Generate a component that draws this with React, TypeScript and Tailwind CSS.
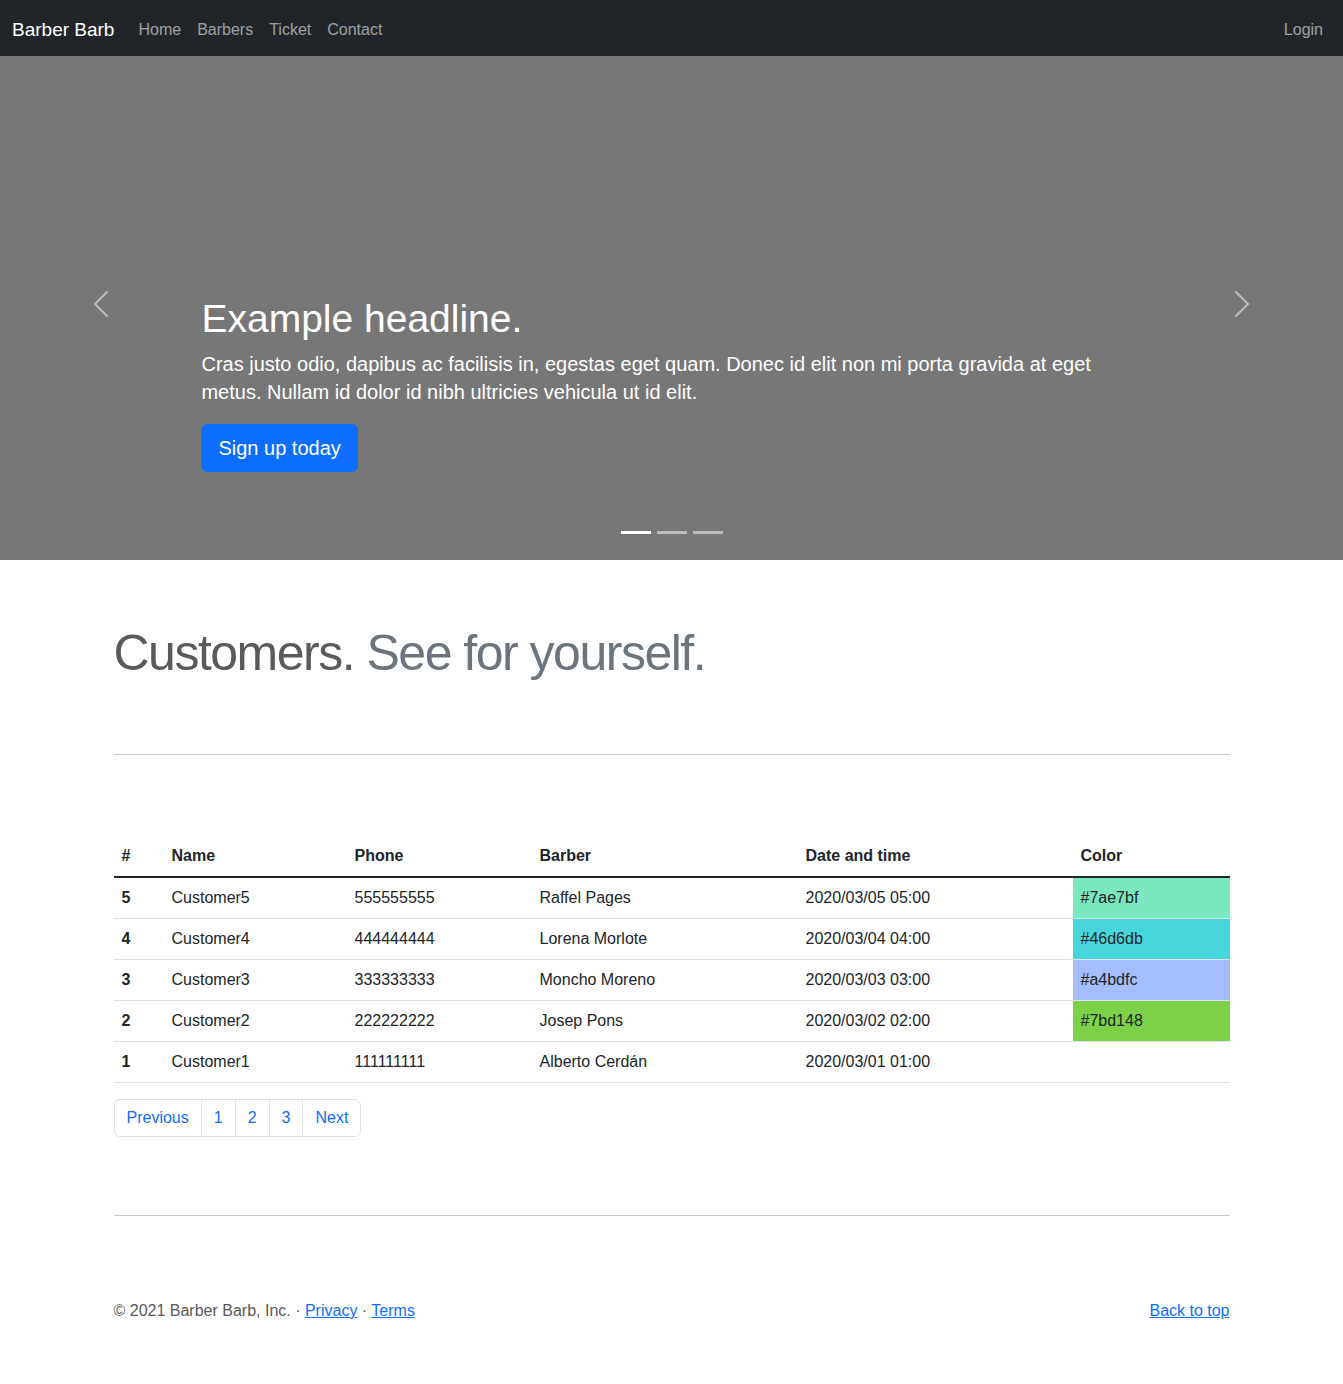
import React from "react";

const rows = [
  { id: 5, name: "Customer5", phone: "555555555", barber: "Raffel Pages", date: "2020/03/05 05:00", color: "#7ae7bf", bg: "bg-[#7ae7bf]" },
  { id: 4, name: "Customer4", phone: "444444444", barber: "Lorena Morlote", date: "2020/03/04 04:00", color: "#46d6db", bg: "bg-[#46d6db]" },
  { id: 3, name: "Customer3", phone: "333333333", barber: "Moncho Moreno", date: "2020/03/03 03:00", color: "#a4bdfc", bg: "bg-[#a4bdfc]" },
  { id: 2, name: "Customer2", phone: "222222222", barber: "Josep Pons", date: "2020/03/02 02:00", color: "#7bd148", bg: "bg-[#7bd148]" },
  { id: 1, name: "Customer1", phone: "111111111", barber: "Alberto Cerdán", date: "2020/03/01 01:00", color: "", bg: "" },
];

function Chevron({ dir }: { dir: "left" | "right" }) {
  return (
    <svg viewBox="0 0 16 16" className="w-8 h-8" fill="#fff">
      {dir === "left" ? (
        <path d="M11.354 1.646a.5.5 0 0 1 0 .708L5.707 8l5.647 5.646a.5.5 0 0 1-.708.708l-6-6a.5.5 0 0 1 0-.708l6-6a.5.5 0 0 1 .708 0z" />
      ) : (
        <path d="M4.646 1.646a.5.5 0 0 1 .708 0l6 6a.5.5 0 0 1 0 .708l-6 6a.5.5 0 0 1-.708-.708L10.293 8 4.646 2.354a.5.5 0 0 1 0-.708z" />
      )}
    </svg>
  );
}

export default function App() {
  return (
    <div className="min-h-[1384px] bg-white text-[#5a5a5a]" style={{ fontFamily: "'Liberation Sans', Arial, sans-serif" }}>
      {/* Navbar */}
      <nav className="h-14 bg-[#212529] px-3 pt-1 flex items-center">
        <span className="text-[19px] text-white mr-4">Barber Barb</span>
        <div className="flex text-base text-white/55">
          <a className="px-2">Home</a>
          <a className="px-2">Barbers</a>
          <a className="px-2">Ticket</a>
          <a className="px-2">Contact</a>
        </div>
        <a className="ml-auto px-2 text-base text-white/55">Login</a>
      </nav>

      {/* Carousel */}
      <section className="h-[504px] bg-[#777] flex">
        <div className="w-[15%] flex items-center justify-center pb-2 opacity-50">
          <Chevron dir="left" />
        </div>
        <div className="flex-1 flex flex-col justify-end text-white">
          <div className="pb-5">
            <h1 className="text-[39px] leading-[1.2] mb-[7px]">Example headline.</h1>
            <p className="text-xl leading-[1.4] mb-[18px]">
              Cras justo odio, dapibus ac facilisis in, egestas eget quam. Donec id elit non mi porta gravida at eget metus. Nullam id dolor id nibh ultricies vehicula ut id elit.
            </p>
            <div className="h-12 mb-5">
              <a className="inline-block bg-[#0d6efd] text-white text-xl leading-[1.5] px-4 py-2 rounded-md border border-[#0d6efd]">Sign up today</a>
            </div>
          </div>
          <div className="flex justify-center gap-1.5 mt-[19px] mb-[26px]">
            <span className="w-[30px] h-[3px] bg-white" />
            <span className="w-[30px] h-[3px] bg-white/50" />
            <span className="w-[30px] h-[3px] bg-white/50" />
          </div>
        </div>
        <div className="w-[15%] flex items-center justify-center pb-2 opacity-50">
          <Chevron dir="right" />
        </div>
      </section>

      {/* Main */}
      <main className="w-[1140px] mx-auto px-3 pt-16">
        <h2 className="text-[50px] leading-none font-light tracking-[-1.5px] pt-1">
          Customers. <span className="text-[#6c757d]">See for yourself.</span>
        </h2>

        <hr className="mt-[76px] mb-[81px] border-t border-[#212529]/25" />

        <table className="w-full table-fixed text-base text-[#212529] mb-4 border-collapse">
          <colgroup>
            <col className="w-[50px]" />
            <col className="w-[183px]" />
            <col className="w-[185px]" />
            <col className="w-[266px]" />
            <col className="w-[275px]" />
            <col className="w-[157px]" />
          </colgroup>
          <thead>
            <tr className="border-b-2 border-[#212529] text-left">
              <th className="p-2 leading-6 font-bold">#</th>
              <th className="p-2 leading-6 font-bold">Name</th>
              <th className="p-2 leading-6 font-bold">Phone</th>
              <th className="p-2 leading-6 font-bold">Barber</th>
              <th className="p-2 leading-6 font-bold">Date and time</th>
              <th className="p-2 leading-6 font-bold">Color</th>
            </tr>
          </thead>
          <tbody>
            {rows.map((r) => (
              <tr key={r.id} className="border-b border-[#dee2e6]">
                <td className="p-2 leading-6 font-bold">{r.id}</td>
                <td className="p-2 leading-6">{r.name}</td>
                <td className="p-2 leading-6">{r.phone}</td>
                <td className="p-2 leading-6">{r.barber}</td>
                <td className="p-2 leading-6">{r.date}</td>
                <td className={`p-2 leading-6 ${r.bg}`}>{r.color}</td>
              </tr>
            ))}
          </tbody>
        </table>

        <ul className="inline-flex text-base text-[#0d6efd] border border-[#dee2e6] rounded-md mb-4 divide-x divide-[#dee2e6]">
          <li className="px-3 py-1.5 leading-6">Previous</li>
          <li className="px-3 py-1.5 leading-6">1</li>
          <li className="px-3 py-1.5 leading-6">2</li>
          <li className="px-3 py-1.5 leading-6">3</li>
          <li className="px-3 py-1.5 leading-6">Next</li>
        </ul>

        <hr className="mt-[62px] mb-[83px] border-t border-[#212529]/25" />

        <footer className="flex justify-between text-base leading-6 pb-12">
          <p>
            © 2021 Barber Barb, Inc. · <a className="text-[#0d6efd] underline">Privacy</a> ·{" "}
            <a className="text-[#0d6efd] underline">Terms</a>
          </p>
          <p>
            <a className="text-[#0d6efd] underline">Back to top</a>
          </p>
        </footer>
      </main>
    </div>
  );
}
